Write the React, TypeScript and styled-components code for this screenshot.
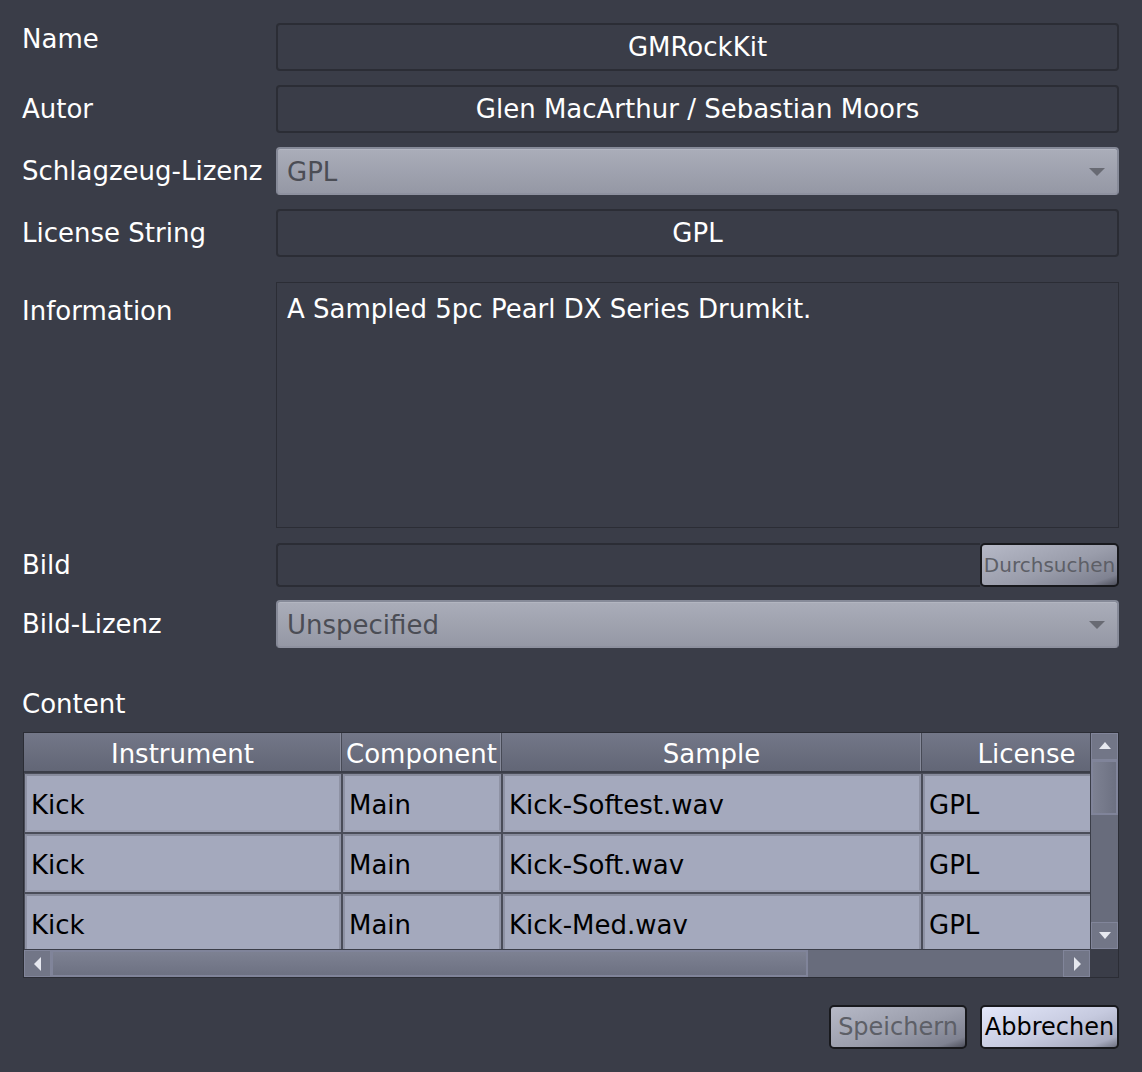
import React from "react";
import styled, { createGlobalStyle } from "styled-components";

const Global = createGlobalStyle`
  html, body { margin: 0; padding: 0; background: #3a3d48; }
  body { font-family: "DejaVu Sans", "Noto Sans", sans-serif; font-size: 26px; color: #ffffff; }
  * { box-sizing: border-box; }
`;

const Page = styled.div`
  width: 1142px;
  height: 1072px;
  background: #3a3d48;
  padding: 23px 23px 0 23px;
  display: flex;
  flex-direction: column;
`;

const Row = styled.div<{ $mt?: number; $h: number }>`
  display: grid;
  grid-template-columns: 253px 1fr;
  height: ${(p) => p.$h}px;
  margin-top: ${(p) => p.$mt ?? 0}px;
`;

const Label = styled.div<{ $top?: number }>`
  font-size: 26px;
  line-height: 30px;
  color: #ffffff;
  white-space: nowrap;
  margin-left: -1px;
  align-self: ${(p) => (p.$top !== undefined ? "start" : "center")};
  padding-top: ${(p) => p.$top ?? 0}px;
`;

const Field = styled.div`
  border: 2px solid #2b2d35;
  border-radius: 4px;
  background: #3a3d48;
  display: flex;
  align-items: center;
  justify-content: center;
  font-size: 26px;
  color: #ffffff;
`;

const Combo = styled.div`
  border: 2px solid #868a98;
  border-bottom-color: #8e919f;
  border-radius: 4px;
  background: linear-gradient(#aaadb9, #9598a5);
  display: flex;
  align-items: center;
  justify-content: space-between;
  padding: 2px 12px 0 9px;
  font-size: 26px;
  color: #4b4d55;
  box-shadow: inset 0 1px 0 #b3b6c1;
`;

const Arrow = styled.div`
  width: 0;
  height: 0;
  border-left: 8px solid transparent;
  border-right: 8px solid transparent;
  border-top: 8px solid #686a73;
`;

const TextArea = styled.div`
  border: 1px solid #2b2d35;
  background: #3a3d48;
  padding: 11px 10px;
  font-size: 26px;
  line-height: 30px;
  color: #ffffff;
`;

const FileRow = styled.div`
  display: flex;
`;

const FileInput = styled.div`
  flex: 1;
  border: 2px solid #2b2d35;
  border-right: none;
  border-radius: 4px 0 0 4px;
  background: #3a3d48;
`;

const Button = styled.button<{ $primary?: boolean; $size?: number; $w: number }>`
  width: ${(p) => p.$w}px;
  height: 44px;
  border: 2px solid #18191d;
  border-radius: 5px;
  padding: 0;
  font-family: "DejaVu Sans", sans-serif;
  font-size: ${(p) => p.$size ?? 24}px;
  color: ${(p) => (p.$primary ? "#000000" : "#5d5f67")};
  background: ${(p) =>
    p.$primary
      ? "linear-gradient(160deg, #e3e7fa 0%, #c6cadf 55%, #a7abbf 88%, #6e7180 100%)"
      : "linear-gradient(160deg, #b6b9c7 0%, #9a9dab 55%, #7f8291 88%, #4e505c 100%)"};
  white-space: nowrap;
  display: flex;
  align-items: center;
  justify-content: center;
`;

const SectionLabel = styled.div`
  margin-top: 41px;
  margin-left: -1px;
  font-size: 26px;
  line-height: 30px;
  color: #ffffff;
`;

const TableFrame = styled.div`
  margin-top: 13px;
  width: 1096px;
  height: 246px;
  display: grid;
  grid-template-columns: 1fr 28px;
  grid-template-rows: 1fr 28px;
  background: #3a3d48;
  border: 1px solid #2b2d35;
`;

const Viewport = styled.div`
  overflow: hidden;
  background: #454854;
`;

const COLS = "318px 160px 420px 210px";

const HeaderRow = styled.div`
  display: grid;
  grid-template-columns: ${COLS};
  height: 40px;
  border-bottom: 2px solid #3b3e49;
`;

const HeaderCell = styled.div`
  background: linear-gradient(#737788, #626676);
  color: #ffffff;
  font-size: 26px;
  display: flex;
  align-items: center;
  justify-content: center;
  padding-top: 4px;
  white-space: nowrap;
  overflow: hidden;
  border-right: 1px solid #474a56;
  box-shadow: inset -1px 0 0 #868a9a;
`;

const BodyRow = styled.div`
  display: grid;
  grid-template-columns: ${COLS};
  height: 60px;
`;

const Cell = styled.div`
  background: #a4a9bd;
  border: 2px solid #8e92a4;
  border-top-color: #878b9c;
  border-bottom-color: #9ca0b3;
  outline: 1px solid #4a4d59;
  margin: 1px;
  color: #000000;
  font-size: 26px;
  display: flex;
  align-items: center;
  padding: 3px 0 0 4px;
  white-space: nowrap;
  overflow: hidden;
`;

const VScroll = styled.div`
  display: flex;
  flex-direction: column;
  background: #686c7c;
  border-left: 1px solid #3b3e49;
`;

const HScroll = styled.div`
  display: flex;
  background: #686c7c;
  border-top: 1px solid #3b3e49;
`;

const ScrollBtn = styled.div`
  width: 27px;
  height: 27px;
  flex: none;
  background: #727687;
  border: 1px solid #81859a;
  display: flex;
  align-items: center;
  justify-content: center;
`;

const Handle = styled.div<{ $len: number; $vertical?: boolean }>`
  flex: none;
  ${(p) => (p.$vertical ? `height: ${p.$len}px;` : `width: ${p.$len}px;`)}
  background: linear-gradient(${(p) => (p.$vertical ? "90deg" : "180deg")}, #7d8192, #6d7182);
  border: 2px solid #80849a;
`;

const Spacer = styled.div`
  flex: 1;
`;

const Corner = styled.div`
  background: #3a3d48;
`;

const Footer = styled.div`
  margin-top: 27px;
  display: flex;
  justify-content: flex-end;
  gap: 13px;
`;

const Tri = ({ dir }: { dir: "up" | "down" | "left" | "right" }) => {
  const pts = {
    up: "2,11 14,11 8,4",
    down: "2,5 14,5 8,12",
    left: "11,2 11,16 4,9",
    right: "5,2 5,16 12,9",
  }[dir];
  return (
    <svg width="16" height="18" viewBox="0 0 16 18">
      <polygon points={pts} fill="#e6e8ef" />
    </svg>
  );
};

const rows = [
  ["Kick", "Main", "Kick-Softest.wav", "GPL"],
  ["Kick", "Main", "Kick-Soft.wav", "GPL"],
  ["Kick", "Main", "Kick-Med.wav", "GPL"],
];

export default function App() {
  return (
    <Page>
      <Global />
      <Row $h={48}>
        <Label $top={1}>Name</Label>
        <Field>GMRockKit</Field>
      </Row>
      <Row $h={48} $mt={14}>
        <Label>Autor</Label>
        <Field>Glen MacArthur / Sebastian Moors</Field>
      </Row>
      <Row $h={48} $mt={14}>
        <Label>Schlagzeug-Lizenz</Label>
        <Combo>
          <span>GPL</span>
          <Arrow />
        </Combo>
      </Row>
      <Row $h={48} $mt={14}>
        <Label>License String</Label>
        <Field>GPL</Field>
      </Row>
      <Row $h={246} $mt={25}>
        <Label $top={14}>Information</Label>
        <TextArea>A Sampled 5pc Pearl DX Series Drumkit.</TextArea>
      </Row>
      <Row $h={44} $mt={15}>
        <Label>Bild</Label>
        <FileRow>
          <FileInput />
          <Button $w={139} $size={20}>Durchsuchen</Button>
        </FileRow>
      </Row>
      <Row $h={48} $mt={13}>
        <Label>Bild-Lizenz</Label>
        <Combo>
          <span>Unspecified</span>
          <Arrow />
        </Combo>
      </Row>
      <SectionLabel>Content</SectionLabel>
      <TableFrame>
        <Viewport>
          <HeaderRow>
            <HeaderCell>Instrument</HeaderCell>
            <HeaderCell>Component</HeaderCell>
            <HeaderCell>Sample</HeaderCell>
            <HeaderCell>License</HeaderCell>
          </HeaderRow>
          {rows.map((r, i) => (
            <BodyRow key={i}>
              {r.map((c, j) => (
                <Cell key={j}>{c}</Cell>
              ))}
            </BodyRow>
          ))}
        </Viewport>
        <VScroll>
          <ScrollBtn>
            <Tri dir="up" />
          </ScrollBtn>
          <Handle $vertical $len={55} />
          <Spacer />
          <ScrollBtn>
            <Tri dir="down" />
          </ScrollBtn>
        </VScroll>
        <HScroll>
          <ScrollBtn>
            <Tri dir="left" />
          </ScrollBtn>
          <Handle $len={757} />
          <Spacer />
          <ScrollBtn>
            <Tri dir="right" />
          </ScrollBtn>
        </HScroll>
        <Corner />
      </TableFrame>
      <Footer>
        <Button $w={138}>Speichern</Button>
        <Button $w={139} $primary>
          Abbrechen
        </Button>
      </Footer>
    </Page>
  );
}
